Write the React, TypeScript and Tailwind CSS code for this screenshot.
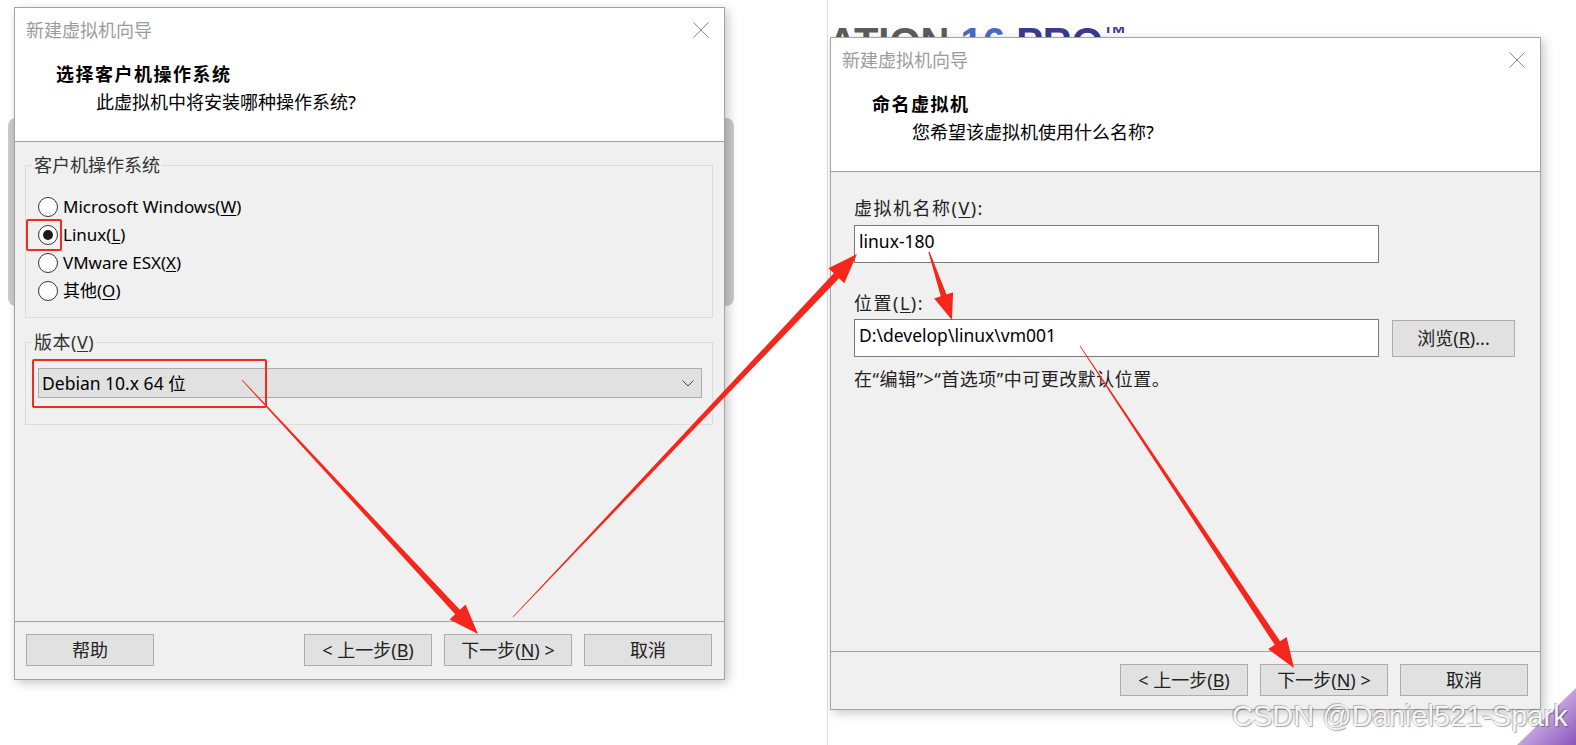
import React from 'react';

const ui = "font-['Noto_Sans','Noto_Sans_CJK_SC',sans-serif]";

function CloseIcon() {
  return (
    <svg width="16" height="16" viewBox="0 0 16 16" className="shrink-0">
      <path d="M0.5 0.5 L15.5 15.5 M15.5 0.5 L0.5 15.5" stroke="#8a8a8a" strokeWidth="1" fill="none" />
    </svg>
  );
}

function Btn({ children, className = '' }: { children: React.ReactNode; className?: string }) {
  return (
    <div className={`w-[128px] h-[32px] flex items-center justify-center border border-[#adadad] bg-[#e1e1e1] text-[18px] text-[#222] ${className}`}>
      {children}
    </div>
  );
}

function Dialog({ heading, sub, help, children }: { heading: string; sub: string; help?: boolean; children: React.ReactNode }) {
  return (
    <div className={`w-[711px] h-[673px] flex flex-col border border-[#a3a3a3] bg-white shadow-[3px_3px_10px_rgba(0,0,0,0.22)] ${ui}`}>
      {/* header */}
      <div className="h-[134px] shrink-0 bg-white border-b border-[#a0a0a0]">
        <div className="flex items-center justify-between pt-[10px] pl-[11px] pr-[15px] h-[34px]">
          <span className="text-[18px] leading-[24px] text-[#9b9b9b]">新建虚拟机向导</span>
          <CloseIcon />
        </div>
        <div className="pl-[41px] mt-[20px] text-[18px] leading-[24px] font-bold text-black tracking-[1.5px]">{heading}</div>
        <div className="pl-[81px] mt-[4px] text-[18px] leading-[24px] text-black">{sub}</div>
      </div>
      {/* body */}
      <div className="flex-1 bg-[#f0f0f0] flex flex-col">{children}</div>
      {/* footer */}
      <div className={`h-[58px] shrink-0 bg-[#f0f0f0] border-t border-[#a0a0a0] pt-[12px] pl-[11px] pr-[12px] flex items-start ${help ? 'justify-between' : 'justify-end'}`}>
        {help && <Btn>帮助</Btn>}
        <div className="flex gap-[12px]">
          <Btn>&lt; 上一步(<u className="underline-offset-2">B</u>)</Btn>
          <Btn>下一步(<u className="underline-offset-2">N</u>) &gt;</Btn>
          <Btn>取消</Btn>
        </div>
      </div>
    </div>
  );
}

function Radio({ checked, children }: { checked?: boolean; children: React.ReactNode }) {
  return (
    <div className="h-[28px] flex items-center">
      <div className="ml-[6px] w-[20px] h-[20px] rounded-full border border-[#333] bg-white flex items-center justify-center">
        {checked && <div className="w-[10px] h-[10px] rounded-full bg-[#1a1a1a]" />}
      </div>
      <span className="ml-[5px] text-[17px] leading-[24px] text-black">{children}</span>
    </div>
  );
}

function arrowPts(x1: number, y1: number, x2: number, y2: number, w0 = 0.4, w1 = 3.2, hw = 11, hl = 30) {
  const dx = x2 - x1, dy = y2 - y1, len = Math.hypot(dx, dy);
  const ux = dx / len, uy = dy / len, nx = -uy, ny = ux;
  const bx = x2 - ux * hl, by = y2 - uy * hl;
  const pts = [
    [x1 + nx * w0, y1 + ny * w0],
    [bx + nx * w1, by + ny * w1],
    [bx + nx * hw, by + ny * hw],
    [x2, y2],
    [bx - nx * hw, by - ny * hw],
    [bx - nx * w1, by - ny * w1],
    [x1 - nx * w0, y1 - ny * w0],
  ];
  return pts.map((p) => p[0].toFixed(1) + ',' + p[1].toFixed(1)).join(' ');
}

export default function App() {
  return (
    <div className="relative w-[1576px] h-[745px] overflow-hidden bg-white">
      {/* window behind the first dialog */}
      <div className="absolute left-[8px] top-[118px] w-[726px] h-[188px] rounded-[8px] bg-[#cbcbcb]" />
      {/* edge of the screenshot on the right */}
      <div className="absolute left-[827px] top-0 w-px h-full bg-[#e2e2e2]" />
      <div className="absolute left-[828px] top-[27px] h-[10px] overflow-hidden whitespace-nowrap font-['Liberation_Sans',sans-serif] font-bold text-[40px] leading-[40px]">
        <div className="-mt-[5px]">
          <span className="text-[#5c5c5c]">ATION </span>
          <span className="text-[#4a6cc0]">16 </span>
          <span className="text-[#3c3a8e]">PRO</span>
          <span className="text-[#3c3a8e] text-[24px] leading-[24px] align-top">™</span>
        </div>
      </div>

      <div className="relative flex items-start">
        <div className="ml-[14px] mt-[7px]">
          <Dialog heading="选择客户机操作系统" sub="此虚拟机中将安装哪种操作系统?" help>
            <fieldset className="mt-[11px] ml-[10px] mr-[11px] border border-[#dcdcdc] pl-[6px] pr-[10px] pt-[16px] pb-[12px]">
              <legend className="px-[2px] text-[18px] leading-[24px] text-[#333]">客户机操作系统</legend>
              <Radio>Microsoft Windows(<u className="underline-offset-2">W</u>)</Radio>
              <Radio checked>Linux(<u className="underline-offset-2">L</u>)</Radio>
              <Radio>VMware ESX(<u className="underline-offset-2">X</u>)</Radio>
              <Radio>其他(<u className="underline-offset-2">O</u>)</Radio>
            </fieldset>
            <fieldset className="mt-[12px] ml-[10px] mr-[11px] border border-[#dcdcdc] pl-[6px] pr-[10px] pt-[14px] pb-[26px]">
              <legend className="px-[2px] text-[18px] leading-[24px] text-[#333] tracking-[0.5px]">版本(<u className="underline-offset-2">V</u>)</legend>
              <div className="ml-[6px] h-[30px] border border-[#adadad] bg-[#e1e1e1] flex items-center justify-between pl-[3px] pr-[7px]">
                <span className="text-[17.5px] leading-[24px] text-black">Debian 10.x 64 位</span>
                <svg width="12" height="7" viewBox="0 0 12 7">
                  <path d="M0.5 0.5 L6 6 L11.5 0.5" stroke="#444" strokeWidth="1" fill="none" />
                </svg>
              </div>
            </fieldset>
          </Dialog>
        </div>

        <div className="ml-[105px] mt-[37px]">
          <Dialog heading="命名虚拟机" sub="您希望该虚拟机使用什么名称?">
            <div className="pl-[23px] pt-[24px]">
              <div className="text-[18px] leading-[24px] text-[#222] tracking-[1.5px]">虚拟机名称(<u className="underline-offset-2">V</u>):</div>
              <div className="mt-[5px] w-[525px] h-[38px] border border-[#7a7a7a] bg-white pl-[4px] pt-[3px] text-[17.5px] leading-[24px] text-black">linux-180</div>
              <div className="mt-[28px] text-[18px] leading-[24px] text-[#222] tracking-[1.5px]">位置(<u className="underline-offset-2">L</u>):</div>
              <div className="mt-[4px] flex items-start">
                <div className="w-[525px] h-[38px] border border-[#7a7a7a] bg-white pl-[4px] pt-[3px] text-[17.5px] leading-[24px] text-black">D:\develop\linux\vm001</div>
                <div className="ml-[13px] mt-[1px] w-[123px] h-[37px] border border-[#adadad] bg-[#e1e1e1] flex items-center justify-center text-[18px] text-[#222]">
                  浏览(<u className="underline-offset-2">R</u>)...
                </div>
              </div>
              <div className="mt-[10px] text-[18px] leading-[24px] text-[#222] tracking-[0.5px]">在“编辑”&gt;“首选项”中可更改默认位置。</div>
            </div>
          </Dialog>
        </div>
      </div>

      {/* annotation boxes */}
      <div className="absolute left-[26px] top-[219px] w-[36px] h-[32px] border-2 border-[#f22b1f] rounded-[2px]" />
      <div className="absolute left-[32px] top-[359px] w-[235px] h-[49px] border-2 border-[#f22b1f] rounded-[2px]" />

      {/* annotation arrows */}
      <svg className="absolute left-0 top-0" width="1576" height="745" viewBox="0 0 1576 745">
        <polygon points={arrowPts(242, 380, 478, 634)} fill="#f5261b" />
        <polygon points={arrowPts(513, 617, 857, 254, 0.3, 3.6, 11, 30)} fill="#f5261b" />
        <polygon points={arrowPts(929, 252, 952, 320, 0.6, 3, 10, 26)} fill="#f5261b" />
        <polygon points={arrowPts(1080, 346, 1294, 668)} fill="#f5261b" />
        <defs>
          <linearGradient id="corner" x1="0" y1="0" x2="1" y2="1">
            <stop offset="0" stopColor="#efe6f6" />
            <stop offset="0.45" stopColor="#c8a9e0" />
            <stop offset="1" stopColor="#8a55bd" />
          </linearGradient>
        </defs>
        <polygon points="1517,745 1576,688 1576,745" fill="url(#corner)" />
      </svg>

      {/* watermark */}
      <div className="absolute left-[1232px] top-[699px] whitespace-nowrap font-['Liberation_Sans',sans-serif] text-[29px] leading-[34px] text-[#f4f4f4] [text-shadow:1px_1px_1px_rgba(0,0,0,0.35),-1px_-1px_1px_rgba(0,0,0,0.25)]">
        CSDN @Daniel521-Spark
      </div>
    </div>
  );
}
